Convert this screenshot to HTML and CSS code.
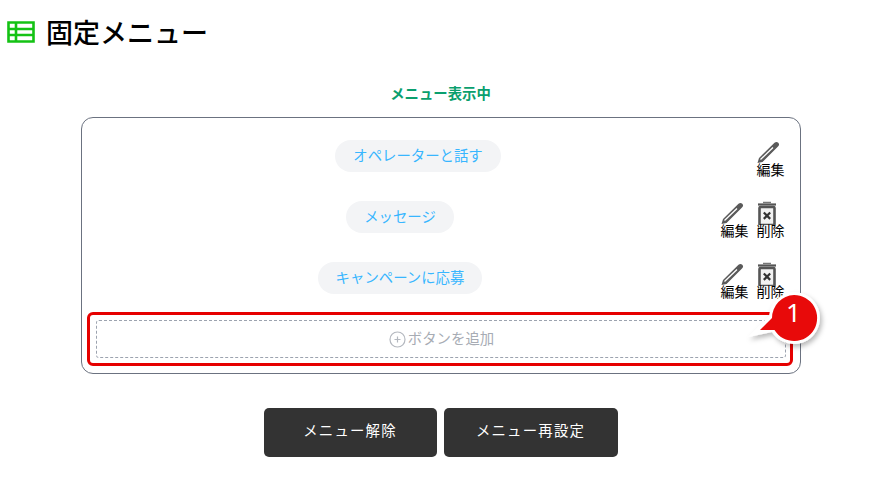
FILE: index.html
```html
<!DOCTYPE html>
<html lang="ja">
<head>
<meta charset="utf-8">
<title>固定メニュー</title>
<link rel="stylesheet" href="styles.css">
</head>
<body>
<div class="page">
  <header class="title-row">
    <svg class="title-icon" width="28" height="22" viewBox="0 0 28 22" aria-hidden="true">
      <path d="M1.500 1.500h25v19h-25zM1.500 8h25M1.500 14h25M9 1.500v19" fill="none" stroke="#14c214" stroke-width="2.600"/>
    </svg>
    <h1 class="title">固定メニュー</h1>
  </header>
  <p class="status">メニュー表示中</p>
  <section class="card">
    <div class="row">
      <div class="pill-wrap"><span class="pill">オペレーターと話す</span></div>
      <div class="actions">
        <div class="action">
          <svg class="icon" width="28" height="24" viewBox="0 0 28 24" aria-hidden="true">
            <path d="M0.500 23 L2 18 L17.500 2.800 Q19.500 1 21.300 2.800 Q23 4.800 21 6.500 L5.500 22 Z" fill="#5a5a5a"/>
            <path d="M3.500 19.500 L16 7.500" stroke="#fff" stroke-width="1.300"/>
          </svg>
          <span class="action-label">編集</span>
        </div>
      </div>
    </div>
    <div class="row">
      <div class="pill-wrap"><span class="pill">メッセージ</span></div>
      <div class="actions">
        <div class="action">
          <svg class="icon" width="28" height="24" viewBox="0 0 28 24" aria-hidden="true">
            <path d="M0.500 23 L2 18 L17.500 2.800 Q19.500 1 21.300 2.800 Q23 4.800 21 6.500 L5.500 22 Z" fill="#5a5a5a"/>
            <path d="M3.500 19.500 L16 7.500" stroke="#fff" stroke-width="1.300"/>
          </svg>
          <span class="action-label">編集</span>
        </div>
        <div class="action">
          <svg class="icon" width="28" height="24" viewBox="0 0 28 24" aria-hidden="true">
            <path d="M1 3.500h18" stroke="#555" stroke-width="2.200" fill="none"/>
            <path d="M6 1.500h8" stroke="#777" stroke-width="1.500" fill="none"/>
            <rect x="2.500" y="6" width="15" height="18" rx="1" fill="#f2f2f2" stroke="#555" stroke-width="2.600"/>
            <path d="M6.800 11.500l6.400 6.400M13.200 11.500l-6.400 6.400" stroke="#333" stroke-width="2.200"/>
          </svg>
          <span class="action-label">削除</span>
        </div>
      </div>
    </div>
    <div class="row">
      <div class="pill-wrap"><span class="pill">キャンペーンに応募</span></div>
      <div class="actions">
        <div class="action">
          <svg class="icon" width="28" height="24" viewBox="0 0 28 24" aria-hidden="true">
            <path d="M0.500 23 L2 18 L17.500 2.800 Q19.500 1 21.300 2.800 Q23 4.800 21 6.500 L5.500 22 Z" fill="#5a5a5a"/>
            <path d="M3.500 19.500 L16 7.500" stroke="#fff" stroke-width="1.300"/>
          </svg>
          <span class="action-label">編集</span>
        </div>
        <div class="action">
          <svg class="icon" width="28" height="24" viewBox="0 0 28 24" aria-hidden="true">
            <path d="M1 3.500h18" stroke="#555" stroke-width="2.200" fill="none"/>
            <path d="M6 1.500h8" stroke="#777" stroke-width="1.500" fill="none"/>
            <rect x="2.500" y="6" width="15" height="18" rx="1" fill="#f2f2f2" stroke="#555" stroke-width="2.600"/>
            <path d="M6.800 11.500l6.400 6.400M13.200 11.500l-6.400 6.400" stroke="#333" stroke-width="2.200"/>
          </svg>
          <span class="action-label">削除</span>
        </div>
      </div>
    </div>
    <div class="add-frame">
      <div class="add">
        <svg class="add-icon" width="17" height="17" viewBox="0 0 17 17" aria-hidden="true">
          <circle cx="8.500" cy="8.500" r="7.500" fill="none" stroke="#b4b8bf" stroke-width="1.200"/>
          <path d="M5.500 8.500h6M8.500 5.500v6" stroke="#b4b8bf" stroke-width="1.200"/>
        </svg>
        <span>ボタンを追加</span>
      </div>
    </div>
    <svg class="callout" width="94" height="80" viewBox="0 0 94 80" aria-hidden="true">
      <defs>
        <filter id="shade" x="-20%" y="-20%" width="140%" height="140%">
          <feDropShadow dx="2" dy="3" stdDeviation="2.500" flood-color="#000" flood-opacity=".28"/>
        </filter>
      </defs>
      <path d="M48 4a26 26 0 1 1-22 40 L2 49 L23 28 A26 26 0 0 1 48 4z" fill="#fff" filter="url(#shade)"/>
      <path d="M48 7a23 23 0 1 1-19.500 35 L14 42 L26 30 A23 23 0 0 1 48 7z" fill="#e80a0a"/>
    </svg>
    <span class="callout-num">1</span>
  </section>
  <div class="buttons">
    <button class="btn btn-off" type="button">メニュー解除</button>
    <button class="btn btn-reset" type="button">メニュー再設定</button>
  </div>
</div>
</body>
</html>
```
FILE: styles.css
```css
* { box-sizing: border-box; }
html, body { margin: 0; padding: 0; background: #fff; }
body {
  font-family: "Noto Sans CJK JP", "Noto Sans", sans-serif;
  color: #000;
  overflow: hidden;
}
.page {
  width: 887px;
  height: 503px;
  padding-right: 6px;
  display: flex;
  flex-direction: column;
  align-items: center;
}
.title-row {
  align-self: stretch;
  display: flex;
  align-items: center;
  gap: 11px;
  padding: 11px 0 0 7px;
  height: 53px;
}
.title-icon { display: block; flex: none; }
.title { margin: 0; font-size: 27px; line-height: 40px; font-weight: 500; }
.status {
  margin: 29px 0 0 0;
  width: 720px;
  height: 35px;
  text-align: center;
  font-size: 14.4px;
  line-height: 21px;
  font-weight: 700;
  color: #0a9f6e;
}
.card {
  position: relative;
  width: 720px;
  height: 257px;
  border: 1px solid #6b7280;
  border-radius: 12px;
  padding: 22px 15px 0 6px;
  display: flex;
  flex-direction: column;
}
.row { height: 61px; display: flex; align-items: flex-start; }
.pill-wrap { flex: 1; display: flex; justify-content: center; padding-right: 8px; }
.pill {
  display: block;
  height: 32px;
  line-height: 29px;
  padding: 0 18px;
  border-radius: 16px;
  background: #f3f4f6;
  color: #38b6ff;
  font-size: 14.4px;
  font-weight: 400;
}
.actions { display: flex; gap: 8px; justify-content: flex-end; }
.action { width: 28px; display: flex; flex-direction: column; align-items: center; }
.icon { display: block; }
.action-label { font-size: 14px; line-height: 14px; margin-top: -2px; white-space: nowrap; }
.add-frame {
  position: absolute;
  left: 5px;
  top: 194px;
  width: 706px;
  height: 54px;
  border: 3px solid #e60000;
  border-radius: 6px;
  padding: 5px 4px 5px 6px;
}
.add {
  height: 38px;
  padding: 0 0 4px 2px;
  border: 1px dashed #9ca3af;
  border-radius: 3px;
  display: flex;
  align-items: center;
  justify-content: center;
  gap: 2px;
  color: #a7acb4;
  font-size: 14.4px;
}
.add-icon { display: block; margin-top: 4px; }
.callout { position: absolute; left: 664px; top: 170px; }
.callout-num {
  position: absolute;
  left: 701px;
  top: 177px;
  width: 22px;
  text-align: center;
  color: #fff;
  font-size: 26px;
  line-height: 34px;
  font-family: "Noto Sans", sans-serif;
}
.buttons { display: flex; gap: 7px; margin-top: 34px; }
.btn {
  height: 49px;
  padding: 0 0 6px;
  border: 0;
  border-radius: 5px;
  background: #333;
  color: #fff;
  font-family: inherit;
  font-size: 14.4px;
  font-weight: 400;
  letter-spacing: 1.2px;
}
.btn-off { width: 173px; }
.btn-reset { width: 174px; }
```
